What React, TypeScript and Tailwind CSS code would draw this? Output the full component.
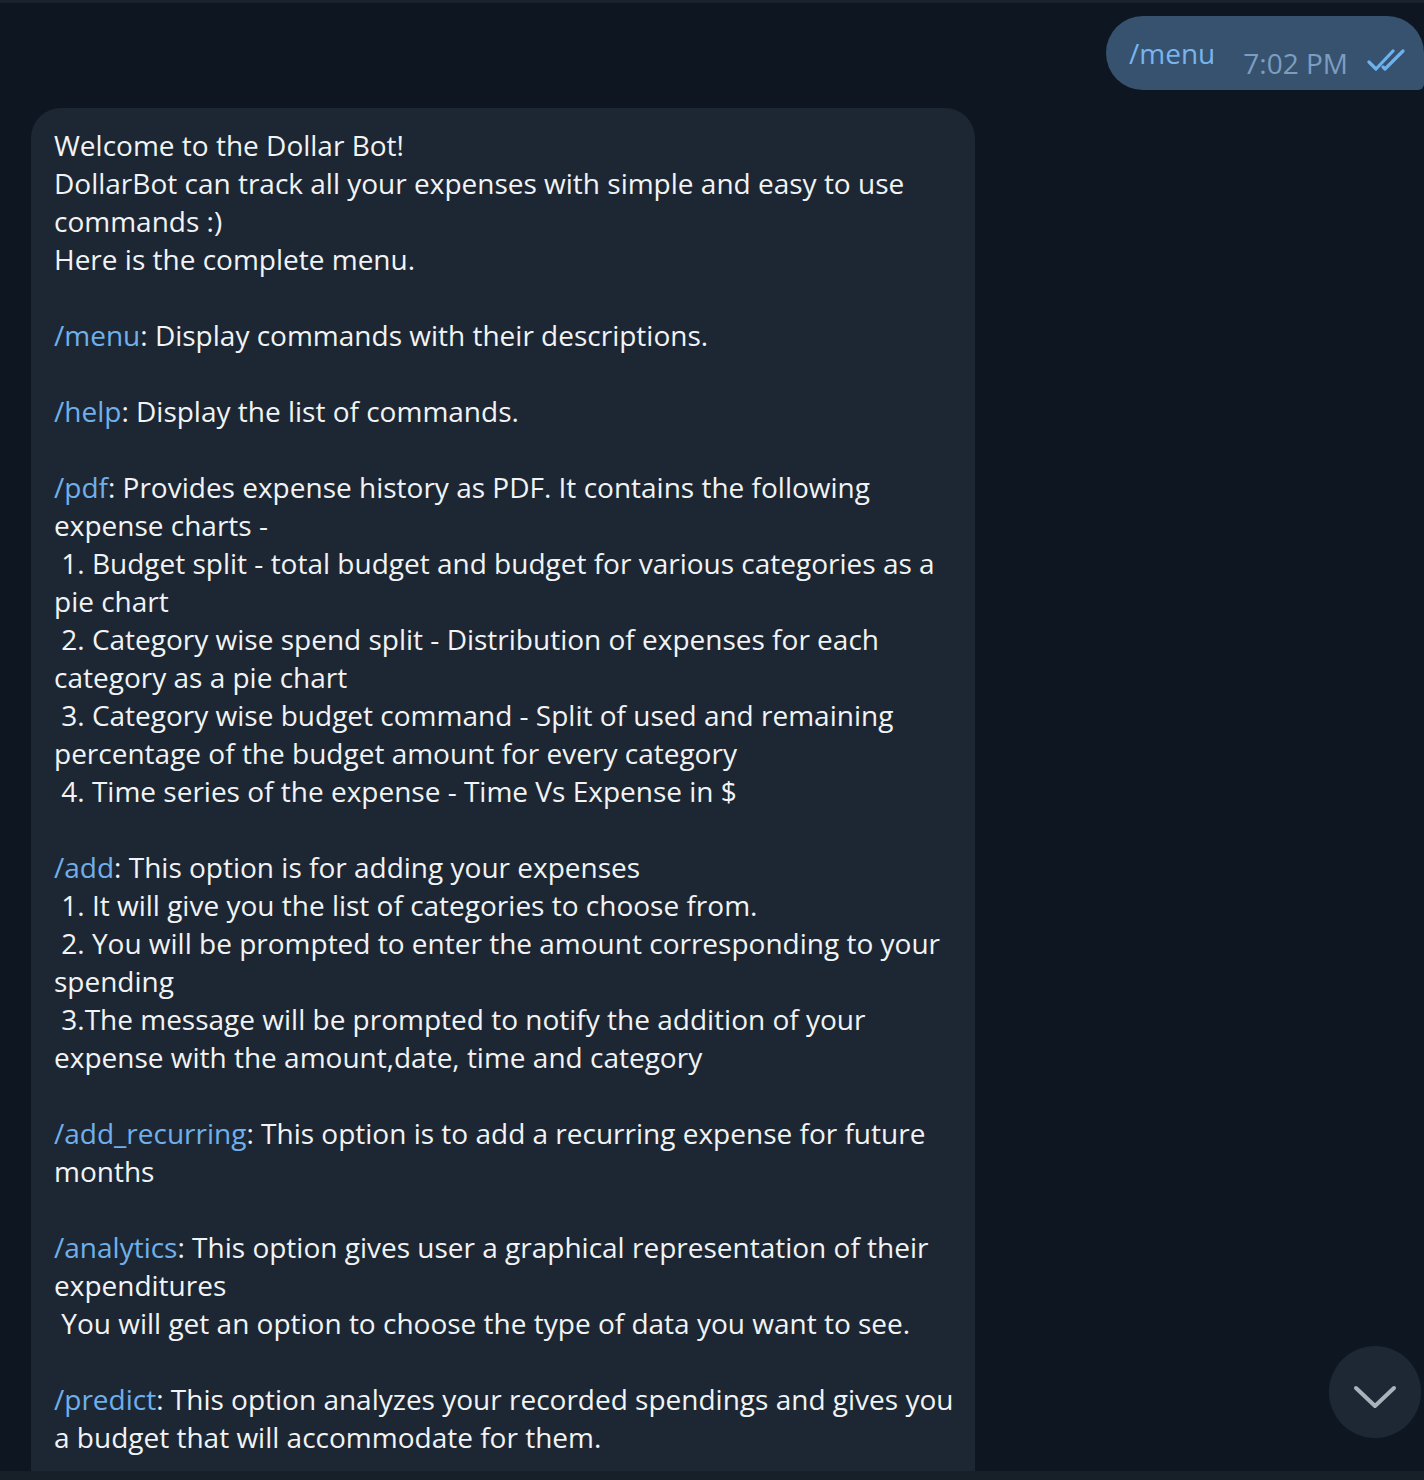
import React from 'react';

type Line = { cmd?: string; text: string };

// each entry is a visual line; null = blank line
const lines: (Line | null)[] = [
    { text: 'Welcome to the Dollar Bot!' },
    { text: 'DollarBot can track all your expenses with simple and easy to use' },
    { text: 'commands :)' },
    { text: 'Here is the complete menu.' },
    null,
    { cmd: '/menu', text: ': Display commands with their descriptions.' },
    null,
    { cmd: '/help', text: ': Display the list of commands.' },
    null,
    { cmd: '/pdf', text: ': Provides expense history as PDF. It contains the following' },
    { text: 'expense charts -' },
    { text: '\u00a01. Budget split - total budget and budget for various categories as a' },
    { text: 'pie chart' },
    { text: '\u00a02. Category wise spend split - Distribution of expenses for each' },
    { text: 'category as a pie chart' },
    { text: '\u00a03. Category wise budget command - Split of used and remaining' },
    { text: 'percentage of the budget amount for every category' },
    { text: '\u00a04. Time series of the expense - Time Vs Expense in $' },
    null,
    { cmd: '/add', text: ': This option is for adding your expenses' },
    { text: '\u00a01. It will give you the list of categories to choose from.' },
    { text: '\u00a02. You will be prompted to enter the amount corresponding to your' },
    { text: 'spending' },
    { text: '\u00a03.The message will be prompted to notify the addition of your' },
    { text: 'expense with the amount,date, time and category' },
    null,
    { cmd: '/add_recurring', text: ': This option is to add a recurring expense for future' },
    { text: 'months' },
    null,
    { cmd: '/analytics', text: ': This option gives user a graphical representation of their' },
    { text: 'expenditures' },
    { text: '\u00a0You will get an option to choose the type of data you want to see.' },
    null,
    { cmd: '/predict', text: ': This option analyzes your recorded spendings and gives you' },
    { text: 'a budget that will accommodate for them.' },
];

const DoubleCheck: React.FC = () => (
    <svg width="42" height="24" viewBox="0 0 42 24" fill="none" stroke="#6cb2ee" strokeWidth="3.2" strokeLinecap="round" strokeLinejoin="round">
        <path d="M2 14 L9 21 L26 3" />
        <path d="M16 19 L18 21 L36 3" />
    </svg>
);

const App: React.FC = () => {
    return (
        <div className="relative w-full h-[1480px] overflow-hidden bg-[#0e1621] flex flex-col" style={{ fontFamily: '"Open Sans", "Noto Sans", sans-serif' }}>
            <div className="h-[3px] bg-[#19222d]" />

            <div className="flex-1 flex flex-col min-h-0">
                {/* outgoing */}
                <div className="self-end mt-[13px] h-[74px] w-[318px] bg-[#36526f] rounded-l-[37px] rounded-tr-[37px] rounded-br-[6px] flex items-center pl-[23px] pr-[14px]">
                    <span className="text-[28px] text-[#78b5ee]">/menu</span>
                    <span className="ml-[28px] mt-[20px] text-[28px] text-[#7d9dc0]">7:02 PM</span>
                    <span className="ml-[19px] mt-[14px]">
                        <DoubleCheck />
                    </span>
                </div>

                {/* incoming */}
                <div className="ml-[31px] mt-[18px] w-[944px] flex-1 bg-[#1d2733] rounded-t-[30px] pl-[23px] pt-[18px]">
                    {lines.map((line, i) =>
                        line === null ? (
                            <div key={i} className="h-[38px]" />
                        ) : (
                            <div key={i} className="h-[38px] leading-[38px] text-[28px] text-[#f1f3f5] whitespace-pre">
                                {line.cmd && <span className="text-[#6fb0ec]">{line.cmd}</span>}
                                {line.text}
                            </div>
                        )
                    )}
                </div>
            </div>

            <div className="h-[9px] bg-[#171f29]" />

            {/* scroll to bottom button */}
            <div className="absolute left-[1329px] top-[1346px] w-[92px] h-[92px] rounded-full bg-[#1e2835] flex items-center justify-center">
                <svg className="mt-[10px]" width="44" height="26" viewBox="0 0 44 26" fill="none" stroke="#aab2bb" strokeWidth="4" strokeLinecap="round" strokeLinejoin="round">
                    <path d="M3 4 L22 22 L41 4" />
                </svg>
            </div>
        </div>
    );
};

export default App;
